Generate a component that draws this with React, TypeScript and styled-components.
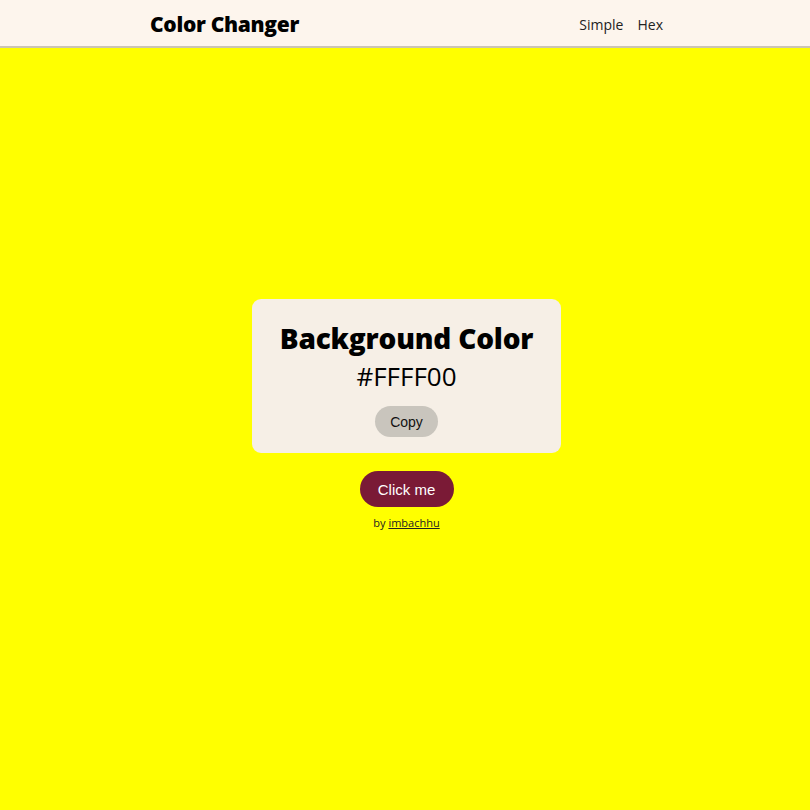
import styled, { createGlobalStyle } from "styled-components";
import { useState } from "react";

const GlobalStyle = createGlobalStyle`
  html, body {
    margin: 0;
    padding: 0;
  }
  body {
    font-family: "Open Sans", "Noto Sans", sans-serif;
    color: #000;
  }
`;

const colors = ["#FFFF00", "#FF6347", "#40E0D0", "#9370DB", "#98FB98"];

export default function App() {
  const [color, setColor] = useState(colors[0]);

  const clickHandler = () => {
    const next = colors[(colors.indexOf(color) + 1) % colors.length];
    setColor(next);
  };

  return (
    <Page bg={color}>
      <GlobalStyle />
      <Header>
        <HeaderInner>
          <Logo>Color Changer</Logo>
          <Nav>
            <NavLink href="#">Simple</NavLink>
            <NavLink href="#">Hex</NavLink>
          </Nav>
        </HeaderInner>
      </Header>
      <Main>
        <Card>
          <Title>Background Color</Title>
          <Hex>{color}</Hex>
          <CopyButton>Copy</CopyButton>
        </Card>
        <ClickButton onClick={clickHandler}>Click me</ClickButton>
        <Credit>
          by <a href="#">imbachhu</a>
        </Credit>
      </Main>
    </Page>
  );
}

const Page = styled.div<{ bg: string }>`
  min-height: 810px;
  background-color: ${({ bg }) => bg};
  display: flex;
  flex-direction: column;
`;

const Header = styled.header`
  height: 46px;
  background-color: #fdf5ed;
  box-shadow: 0 2px 0 #cbc4b3;
  display: flex;
  align-items: center;
  padding-left: 3px;
`;

const HeaderInner = styled.div`
  width: 513px;
  margin: 0 auto;
  display: flex;
  align-items: center;
  justify-content: space-between;
  padding-top: 2px;
`;

const Logo = styled.h1`
  margin: 0;
  font-size: 21px;
  font-weight: 800;
  letter-spacing: -0.3px;
`;

const Nav = styled.nav`
  display: flex;
  gap: 14px;
`;

const NavLink = styled.a`
  color: #222;
  text-decoration: none;
  font-size: 14px;
`;

const Main = styled.main`
  flex: 1;
  display: flex;
  flex-direction: column;
  align-items: center;
  padding-top: 253px;
  padding-left: 3px;
`;

const Card = styled.div`
  width: 309px;
  height: 154px;
  box-sizing: border-box;
  background-color: #f6efe6;
  border-radius: 9px;
  display: flex;
  flex-direction: column;
  align-items: center;
  padding-top: 20px;
`;

const Title = styled.h2`
  margin: 0;
  font-size: 28px;
  font-weight: 800;
  line-height: 38px;
  letter-spacing: -0.2px;
`;

const Hex = styled.div`
  font-size: 26px;
  line-height: 38px;
  font-weight: 400;
`;

const CopyButton = styled.button`
  margin-top: 11px;
  width: 63px;
  height: 31px;
  border: none;
  border-radius: 16px;
  background-color: #c9c5bd;
  font-family: "Liberation Sans", Arial, sans-serif;
  font-size: 14px;
  color: #111;
  cursor: pointer;
`;

const ClickButton = styled.button`
  margin-top: 18px;
  width: 94px;
  height: 36px;
  border: none;
  border-radius: 18px;
  background-color: #7a1a36;
  color: #fff;
  font-family: "Liberation Sans", Arial, sans-serif;
  font-size: 15px;
  cursor: pointer;
`;

const Credit = styled.p`
  margin: 8px 0 0;
  font-size: 11px;
  color: #222;

  a {
    color: #222;
  }
`;
